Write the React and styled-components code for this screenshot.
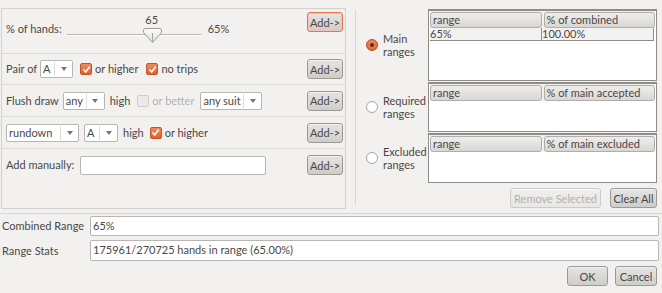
import React from 'react';
import styled, { createGlobalStyle, css } from 'styled-components';

const Global = createGlobalStyle`
  html, body { margin: 0; padding: 0; background: #f2f1f0; }
  body {
    font-family: Lato, 'Liberation Sans', Arial, sans-serif;
    font-size: 11px;
    color: #4a4745;
  }
  * { box-sizing: border-box; }
`;

const Window = styled.div`
  width: 662px;
  height: 293px;
  display: flex;
  flex-direction: column;
  overflow: hidden;
`;

const Top = styled.div`
  display: flex;
  align-items: flex-start;
  height: 213px;
`;

const LeftPanel = styled.div`
  margin: 8px 0 0 1px;
  width: 345px;
  height: 201px;
  border: 1px solid #d3d1cd;
  display: flex;
  flex-direction: column;
`;

const Row = styled.div`
  display: flex;
  align-items: ${p => (p.top ? 'flex-start' : 'center')};
  height: ${p => p.h}px;
  padding: ${p => (p.top ? '3px' : '0')} 2px 0 4px;
  border-bottom: ${p => (p.last ? 'none' : '1px solid #dcdad6')};
  white-space: nowrap;
`;

const Text = styled.span`
  line-height: 14px;
  color: ${p => (p.disabled ? '#b3b1ad' : '#4a4745')};
  margin-left: ${p => p.ml || 0}px;
  margin-top: ${p => p.mt || 0}px;
`;

const Spacer = styled.div`
  flex: 1;
`;

const Button = styled.button`
  font-family: inherit;
  font-size: 11px;
  height: 20px;
  width: ${p => p.w}px;
  padding: 0;
  margin-left: ${p => p.ml || 0}px;
  border-radius: 3px;
  border: 1px solid ${p => (p.focus ? '#e9764c' : p.disabled ? '#cdcbc7' : '#9c9a96')};
  color: ${p => (p.disabled ? '#b3b1ad' : '#4a4745')};
  background: ${p =>
    p.disabled
      ? 'linear-gradient(#f0efed, #e8e7e5)'
      : 'linear-gradient(#e6e5e3, #cfcdca)'};
  box-shadow: ${p => (p.focus ? 'inset 0 0 0 1px #f3c1ad' : 'inset 0 1px 0 rgba(255,255,255,0.5)')};
`;

const SliderBox = styled.div`
  position: relative;
  width: 135px;
  height: 32px;
  margin-left: 5px;
`;

const Rail = styled.div`
  position: absolute;
  left: 0;
  right: 0;
  top: 22px;
  height: 2px;
  border-top: 1px solid #b9b7b3;
  border-bottom: 1px solid #ffffff;
`;

const Thumb = styled.svg`
  position: absolute;
  left: ${p => p.x}px;
  top: 16px;
`;

const ThumbValue = styled.span`
  position: absolute;
  top: 1px;
  left: ${p => p.x}px;
  width: 30px;
  text-align: center;
  line-height: 14px;
`;

const Combo = styled.div`
  display: flex;
  align-items: center;
  width: ${p => p.w}px;
  height: 18px;
  margin-left: ${p => p.ml || 0}px;
  background: #fff;
  border: 1px solid #b8b6b2;
  border-radius: 2px;
`;

const ComboValue = styled.span`
  flex: 1;
  padding-left: 2px;
  line-height: 14px;
  overflow: hidden;
`;

const ComboArrow = styled.span`
  flex: 0 0 18px;
  height: 14px;
  border-left: 1px solid #dcdad6;
  display: flex;
  align-items: center;
  justify-content: center;
  &::after {
    content: '';
    border-top: 4px solid #77756f;
    border-left: 3px solid transparent;
    border-right: 3px solid transparent;
  }
`;

const Box = styled.span`
  display: inline-flex;
  align-items: center;
  justify-content: center;
  width: 12px;
  height: 12px;
  margin-left: ${p => p.ml || 0}px;
  border-radius: 2px;
  ${p =>
    p.checked
      ? css`
          background: linear-gradient(#f08a5d, #e0602f);
          border: 1px solid #c4552b;
        `
      : css`
          background: #ebeae8;
          border: 1px solid #cfcdc9;
        `}
`;

const Field = styled.div`
  height: ${p => p.h || 20}px;
  width: ${p => (p.w ? `${p.w}px` : 'auto')};
  margin-left: ${p => p.ml || 0}px;
  background: #fff;
  border: 1px solid #b8b6b2;
  border-radius: 2px;
  padding-left: 2px;
  line-height: 18px;
`;

const VSep = styled.div`
  width: 1px;
  height: 195px;
  margin: 10px 0 0 9px;
  background: #d8d6d2;
`;

const RightPanel = styled.div`
  display: grid;
  grid-template-columns: 62px 229px;
  grid-template-rows: 72px 50px 50px auto;
  row-gap: 1px;
  padding: 9px 0 0 10px;
`;

const RadioLabel = styled.label`
  display: flex;
  align-items: center;
  gap: 5px;
  line-height: 13px;
  white-space: nowrap;
`;

const Radio = styled.span`
  width: 12px;
  height: 12px;
  border-radius: 50%;
  flex-shrink: 0;
  display: flex;
  align-items: center;
  justify-content: center;
  ${p =>
    p.checked
      ? css`
          background: radial-gradient(circle at 50% 35%, #f3926a, #dd5a2b);
          border: 1px solid #b94c25;
          &::after {
            content: '';
            width: 4px;
            height: 4px;
            border-radius: 50%;
            background: #5a2a18;
          }
        `
      : css`
          background: #fff;
          border: 1px solid #a9a7a3;
        `}
`;

const Table = styled.div`
  background: #fff;
  border: 1px solid #8f8d89;
  border-top-width: 2px;
  padding: 0 1px;
  display: flex;
  flex-direction: column;
  position: relative;
`;

const HeadRow = styled.div`
  display: flex;
  gap: 2px;
  height: 17px;
  padding-top: 1px;
  background: #f2f1f0;
`;

const HeadCell = styled.div`
  flex: 1;
  border: 1px solid #b0aeaa;
  border-radius: 3px;
  background: linear-gradient(#efeeec, #d9d7d4);
  padding-left: 2px;
  line-height: 14px;
`;

const DataRow = styled.div`
  display: flex;
  height: 13px;
  background: #f3f2f1;
  border-bottom: 1px solid #8f8d89;
  border-right: 1px solid #8f8d89;
  margin-right: 1px;
`;

const DataCell = styled.div`
  flex: 1;
  line-height: 12px;
  border-right: ${p => (p.last ? 'none' : '1px solid #8f8d89')};
`;

const ActionRow = styled.div`
  grid-column: 2;
  display: flex;
  justify-content: flex-end;
  margin-top: 4px;
`;

const HLine = styled.div`
  height: 1px;
  background: #d8d6d2;
`;

const Form = styled.div`
  display: grid;
  grid-template-columns: 88px 1fr;
  row-gap: 4px;
  padding: 2px 3px 0 2px;
  align-items: center;
`;

const Footer = styled.div`
  display: flex;
  justify-content: flex-end;
  padding: 5px 5px 0 0;
`;

const Check = () => (
  <svg width="9" height="9" viewBox="0 0 9 9">
    <path d="M1.5 4.5 L3.7 7 L7.8 1.5" fill="none" stroke="#fff" strokeWidth="1.6" />
  </svg>
);

const CheckBox = ({ checked, ml }) => (
  <Box checked={checked} ml={ml}>{checked && <Check />}</Box>
);

const Select = ({ w, ml, value }) => (
  <Combo w={w} ml={ml}>
    <ComboValue>{value}</ComboValue>
    <ComboArrow />
  </Combo>
);

const RangeTable = ({ cols, rows }) => (
  <Table>
    <HeadRow>
      {cols.map(c => <HeadCell key={c}>{c}</HeadCell>)}
    </HeadRow>
    {rows.map((r, i) => (
      <DataRow key={i}>
        {r.map((c, j) => <DataCell key={j} last={j === r.length - 1}>{c}</DataCell>)}
      </DataRow>
    ))}
  </Table>
);

const tables = [
  { label: ['Main', 'ranges'], checked: true, cols: ['range', '% of combined'], rows: [['65%', '100.00%']] },
  { label: ['Required', 'ranges'], cols: ['range', '% of main accepted'], rows: [] },
  { label: ['Excluded', 'ranges'], cols: ['range', '% of main excluded'], rows: [] },
];

export default function App() {
  const value = 65;
  const thumbX = Math.round((value / 100) * 117);
  return (
    <Window>
      <Global />
      <Top>
        <LeftPanel>
          <Row h={45} top>
            <Text mt={10}>% of hands:</Text>
            <SliderBox>
              <ThumbValue x={thumbX - 6}>{value}</ThumbValue>
              <Rail />
              <Thumb x={thumbX} width="19" height="15" viewBox="0 0 19 15">
                <defs>
                  <linearGradient id="tg" x1="0" y1="0" x2="0" y2="1">
                    <stop offset="0" stopColor="#fbfbfa" />
                    <stop offset="1" stopColor="#e2e0dd" />
                  </linearGradient>
                </defs>
                <path d="M2.5 0.5 H16.5 Q18.5 0.5 18.5 2.5 V4.5 L9.5 14.5 L0.5 4.5 V2.5 Q0.5 0.5 2.5 0.5 Z"
                  fill="url(#tg)" stroke="#9c9a96" />
                <path d="M9.5 5 V14" stroke="#a9a7a3" />
              </Thumb>
            </SliderBox>
            <Text mt={10} ml={6}>{value}%</Text>
            <Spacer />
            <Button w={36} focus>Add-&gt;</Button>
          </Row>
          <Row h={31}>
            <Text>Pair of</Text>
            <Select w={33} ml={3} value="A" />
            <CheckBox checked ml={7} />
            <Text ml={3}>or higher</Text>
            <CheckBox checked ml={8} />
            <Text ml={3}>no trips</Text>
            <Spacer />
            <Button w={36}>Add-&gt;</Button>
          </Row>
          <Row h={32}>
            <Text>Flush draw</Text>
            <Select w={42} ml={4} value="any" />
            <Text ml={5}>high</Text>
            <CheckBox ml={7} />
            <Text disabled ml={3}>or better</Text>
            <Select w={62} ml={6} value="any suit" />
            <Spacer />
            <Button w={36}>Add-&gt;</Button>
          </Row>
          <Row h={32}>
            <Select w={73} value="rundown" />
            <Select w={34} ml={5} value="A" />
            <Text ml={5}>high</Text>
            <CheckBox checked ml={6} />
            <Text ml={3}>or higher</Text>
            <Spacer />
            <Button w={36}>Add-&gt;</Button>
          </Row>
          <Row h={32} last>
            <Text>Add manually:</Text>
            <Field w={186} h={19} ml={6} />
            <Spacer />
            <Button w={36}>Add-&gt;</Button>
          </Row>
        </LeftPanel>
        <VSep />
        <RightPanel>
          {tables.map(t => (
            <React.Fragment key={t.label[0]}>
              <RadioLabel>
                <Radio checked={t.checked} />
                <span>{t.label[0]}<br />{t.label[1]}</span>
              </RadioLabel>
              <RangeTable cols={t.cols} rows={t.rows} />
            </React.Fragment>
          ))}
          <ActionRow>
            <Button w={91} disabled>Remove Selected</Button>
            <Button w={47} ml={9}>Clear All</Button>
          </ActionRow>
        </RightPanel>
      </Top>
      <HLine />
      <Form>
        <Text>Combined Range</Text>
        <Field>65%</Field>
        <Text>Range Stats</Text>
        <Field h={21}>175961/270725 hands in range (65.00%)</Field>
      </Form>
      <Footer>
        <Button w={41}>OK</Button>
        <Button w={42} ml={7}>Cancel</Button>
      </Footer>
    </Window>
  );
}
